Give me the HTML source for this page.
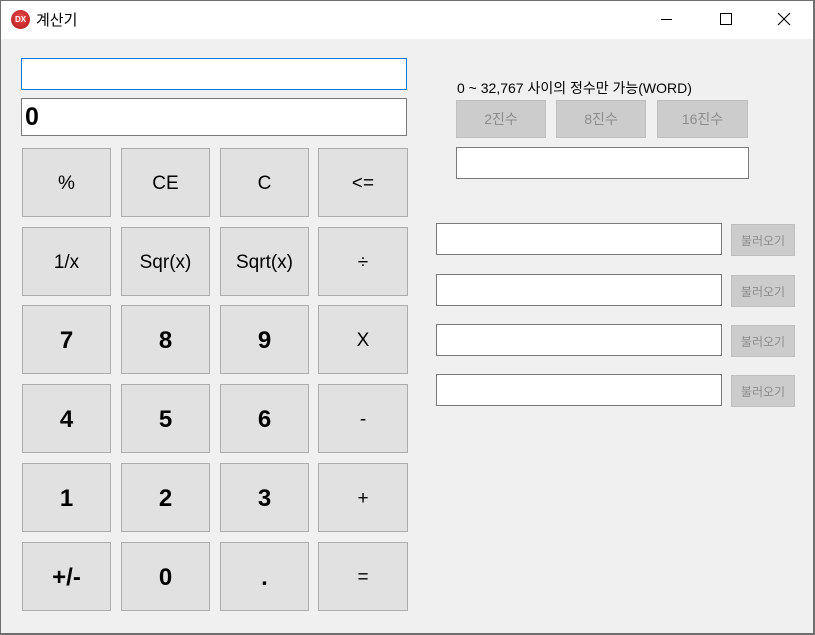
<!DOCTYPE html>
<html><head><meta charset="utf-8"><style>
*{margin:0;padding:0;box-sizing:border-box}
html,body{width:815px;height:635px;overflow:hidden;background:#6f6f6f}
body{position:relative;font-family:"Liberation Sans","Noto Sans CJK KR",sans-serif}
#win{position:absolute;left:1px;top:1px;width:812px;height:632px;background:#f0f0f0}
#title{position:absolute;left:0;top:0;width:812px;height:38px;background:#fff}
.a{position:absolute}
.b{position:absolute;background:#e1e1e1;border:1px solid #adadad;display:flex;align-items:center;justify-content:center;font-size:19px;color:#000;padding-top:3px}
.bold{font-weight:bold;font-size:24px}
.in{position:absolute;background:#fff;border:1px solid #7a7a7a}
.g{position:absolute;background:#cccccc;border:1px solid #bfbfbf;color:#8c8c8c;display:flex;align-items:center;justify-content:center;font-size:14px}
.s{font-size:12px}
</style></head><body><div id="win">
<div id="title">
 <div class="a" style="left:10px;top:9px;width:19px;height:19px;border-radius:50%;background:radial-gradient(circle at 50% 40%,#e84a4a,#b01818);color:#fff;font-size:8px;font-weight:bold;display:flex;align-items:center;justify-content:center">DX</div>
 <div class="a" style="left:35px;top:8px;font-size:15px;color:#000">계산기</div>
 <div class="a" style="left:660px;top:18px;width:11px;height:1px;background:#000"></div>
 <div class="a" style="left:719px;top:12px;width:12px;height:12px;border:1px solid #000"></div>
 <svg class="a" style="left:776px;top:11px" width="14" height="14"><path d="M1 1L13 13M13 1L1 13" stroke="#000" stroke-width="1.1"/></svg>
</div>
<div class="in" style="left:20px;top:57px;width:386px;height:32px;border-color:#0078d7"></div>
<div class="in" style="left:20px;top:97px;width:386px;height:38px"><span class="a" style="left:3px;top:4px;font-size:25px;font-weight:bold">0</span></div>

<div class="b" style="left:21px;top:147px;width:89px;height:69px">%</div>
<div class="b" style="left:120px;top:147px;width:89px;height:69px">CE</div>
<div class="b" style="left:219px;top:147px;width:89px;height:69px">C</div>
<div class="b" style="left:317px;top:147px;width:90px;height:69px">&lt;=</div>

<div class="b" style="left:21px;top:226px;width:89px;height:69px">1/x</div>
<div class="b" style="left:120px;top:226px;width:89px;height:69px">Sqr(x)</div>
<div class="b" style="left:219px;top:226px;width:89px;height:69px">Sqrt(x)</div>
<div class="b" style="left:317px;top:226px;width:90px;height:69px">÷</div>

<div class="b bold" style="left:21px;top:304px;width:89px;height:69px">7</div>
<div class="b bold" style="left:120px;top:304px;width:89px;height:69px">8</div>
<div class="b bold" style="left:219px;top:304px;width:89px;height:69px">9</div>
<div class="b" style="left:317px;top:304px;width:90px;height:69px">X</div>

<div class="b bold" style="left:21px;top:383px;width:89px;height:69px">4</div>
<div class="b bold" style="left:120px;top:383px;width:89px;height:69px">5</div>
<div class="b bold" style="left:219px;top:383px;width:89px;height:69px">6</div>
<div class="b" style="left:317px;top:383px;width:90px;height:69px">-</div>

<div class="b bold" style="left:21px;top:462px;width:89px;height:69px">1</div>
<div class="b bold" style="left:120px;top:462px;width:89px;height:69px">2</div>
<div class="b bold" style="left:219px;top:462px;width:89px;height:69px">3</div>
<div class="b" style="left:317px;top:462px;width:90px;height:69px">+</div>

<div class="b bold" style="left:21px;top:541px;width:89px;height:69px">+/-</div>
<div class="b bold" style="left:120px;top:541px;width:89px;height:69px">0</div>
<div class="b bold" style="left:219px;top:541px;width:89px;height:69px">.</div>
<div class="b" style="left:317px;top:541px;width:90px;height:69px">=</div>

<div class="a" style="left:456px;top:77px;font-size:14px;color:#000">0 ~ 32,767 사이의 정수만 가능(WORD)</div>
<div class="g" style="left:455px;top:99px;width:90px;height:38px">2진수</div>
<div class="g" style="left:555px;top:99px;width:90px;height:38px">8진수</div>
<div class="g" style="left:656px;top:99px;width:91px;height:38px">16진수</div>
<div class="in" style="left:455px;top:146px;width:293px;height:32px"></div>

<div class="in" style="left:435px;top:222px;width:286px;height:32px"></div>
<div class="g s" style="left:730px;top:223px;width:64px;height:32px">불러오기</div>
<div class="in" style="left:435px;top:273px;width:286px;height:32px"></div>
<div class="g s" style="left:730px;top:274px;width:64px;height:32px">불러오기</div>
<div class="in" style="left:435px;top:323px;width:286px;height:32px"></div>
<div class="g s" style="left:730px;top:324px;width:64px;height:32px">불러오기</div>
<div class="in" style="left:435px;top:373px;width:286px;height:32px"></div>
<div class="g s" style="left:730px;top:374px;width:64px;height:32px">불러오기</div>
</div></body></html>
